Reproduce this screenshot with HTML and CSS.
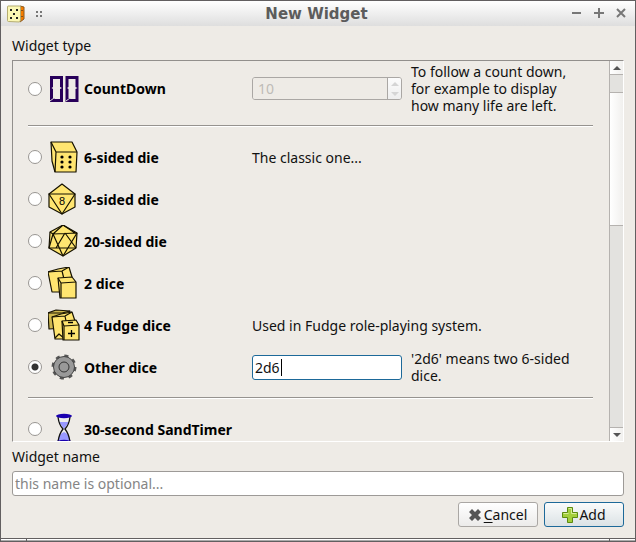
FILE: index.html
```html
<!DOCTYPE html>
<html lang="en">
<head>
<meta charset="utf-8">
<title>New Widget</title>
<link rel="stylesheet" href="styles.css">
</head>
<body>
<div class="window">
  <header class="titlebar">
    <div class="titlebar-side">
      <svg viewBox="0 0 18 18" width="18" height="18"><path d="M13 1l4 1v12l-4 3z" fill="#f57c00" stroke="#8a5a20"/><path d="M1 1h11.500q1 0 1 1v13l-1 2-11-.5q-1 0-1-1V2q0-1 .5-1z" fill="#fbf7b4" stroke="#b5ad70"/><path d="M3 4h2v2H3zM9 4h2v2H9zM6 8h2v2H6zM3 12h2v2H3zM9 12h2v2H9z" fill="#222"/><path d="M15 5v1M15 11v1" stroke="#222"/></svg>
      <svg viewBox="0 0 6 6" width="6" height="6"><path d="M0 0h2v2H0zM4 0h2v2H4zM0 4h2v2H0zM4 4h2v2H4z" fill="#777"/></svg>
    </div>
    <h1 class="title">New Widget</h1>
    <div class="titlebar-side titlebar-end">
      <button class="win-btn" aria-label="Minimize"><svg viewBox="0 0 10 10" width="10" height="10"><path d="M0 4h9"/></svg></button>
      <button class="win-btn" aria-label="Maximize"><svg viewBox="0 0 10 10" width="10" height="10"><path d="M0 4h10M5 -1v10"/></svg></button>
      <button class="win-btn" aria-label="Close"><svg viewBox="0 0 10 10" width="10" height="10"><path d="M1 0l8 8M9 0l-8 8"/></svg></button>
    </div>
  </header>

  <main class="content">
    <h2 class="label">Widget type</h2>
    <div class="type-box">
      <div class="type-list">
        <div class="row row-tall">
          <input type="radio" name="type" id="t-count">
          <svg class="icon" viewBox="0 0 32 32"><path fill="#28005a" fill-rule="evenodd" d="M2 3h13v26H2zM5 6v8l-1.500 1L5 16v9l2 1h5V16l2-1-2-1V6zM17.500 3h13v26h-13zM20.500 6v8l-1.500 1 1.500 1v9l2 1h5V16l2-1-2-1V6z"/><path d="M2 28l4-3M18 28l4-3" stroke="#ddd"/></svg>
          <label for="t-count">CountDown</label>
          <div class="spin"><input class="spin-input" type="number" value="10" disabled aria-label="Count"><span class="spin-arrows"><svg viewBox="0 0 8 14" width="8" height="14"><path d="M0 4l4-4 4 4zM0 10h8l-4 4z" fill="#d5d5d5"/></svg></span></div>
          <p class="note">To follow a count down, for example to display how many life are left.</p>
        </div>
        <hr>
        <div class="row">
          <input type="radio" name="type" id="t-6">
          <svg class="icon" viewBox="0 0 32 32"><path class="die" d="M3 1h21l5 10-1 20H7L4 20z"/><path class="die-edge" d="M3 1l5 10h21M8 11L7 31"/><g fill="#000"><circle cx="14" cy="16" r="1.600"/><circle cx="22" cy="16" r="1.600"/><circle cx="14" cy="21" r="1.600"/><circle cx="22" cy="21" r="1.600"/><circle cx="14" cy="26" r="1.600"/><circle cx="22" cy="26" r="1.600"/></g></svg>
          <label for="t-6">6-sided die</label>
          <p class="note note-wide">The classic one...</p>
        </div>
        <div class="row">
          <input type="radio" name="type" id="t-8">
          <svg class="icon" viewBox="0 0 32 32"><path class="die" d="M14 1l13 10v13l-13 7L1 24V11z"/><path class="die-edge" d="M1 11h26L14 31z"/><text class="die-digit" x="14" y="22">8</text></svg>
          <label for="t-8">8-sided die</label>
        </div>
        <div class="row">
          <input type="radio" name="type" id="t-20">
          <svg class="icon" viewBox="0 0 32 32"><path class="die" d="M15 0l14 8-1 15-13 8L1 23 2 7z"/><path class="die-edge" d="M15 0L5 9l24-1M2 7l3 2M15 0l12 8M5 9L1 23l27 0M5 9l10 22M17 8L8 23M17 8l11 15M29 8L15 31"/></svg>
          <label for="t-20">20-sided die</label>
        </div>
        <div class="row">
          <input type="radio" name="type" id="t-2">
          <svg class="icon" viewBox="0 0 32 32"><path class="die" d="M0 5l10-3 11-2 3 10-10 15H4z"/><path class="die-edge" d="M0 5l14-1 7-4M14 4l2 8"/><path class="die" d="M10 11l14-1 4 5v16H12z"/><path class="die-edge" d="M10 11l3 5 15-1M13 16v15"/></svg>
          <label for="t-2">2 dice</label>
        </div>
        <div class="row">
          <input type="radio" name="type" id="t-4">
          <svg class="icon" viewBox="0 0 32 32"><path class="die die-shade" d="M0 4l8-3 14 1-5 17-16 1z"/><path class="die-edge" d="M0 4l14 0 8-2"/><path class="die" d="M4 8l9-3 11-2 3 9-8 18H7z"/><path class="die-edge" d="M4 8l13-1 7-4M17 7l1 5M7 29l4-4 6 5"/><path class="die" d="M14 12l14-1 3 5v15H15z"/><path class="die-edge" d="M14 12l2 5 15-1M16 17v14"/><path d="M20 13.500h5M20 24.500h7M23.500 21v7" stroke="#000" stroke-width="1.300"/></svg>
          <label for="t-4">4 Fudge dice</label>
          <p class="note note-wide">Used in Fudge role-playing system.</p>
        </div>
        <div class="row">
          <input type="radio" name="type" id="t-other" checked>
          <svg class="icon" viewBox="0 0 32 32"><circle cx="16" cy="16" r="11" fill="none" stroke="#555" stroke-width="3" stroke-dasharray="4 4.640"/><circle cx="16" cy="16" r="10.500" fill="#999" stroke="#444"/><circle cx="16" cy="16" r="5" fill="#999" stroke="#333"/></svg>
          <label for="t-other">Other dice</label>
          <div class="dice-field"><input class="field field-active" type="text" value="2d6" aria-label="Dice expression"><span class="caret"></span></div>
          <p class="note">'2d6' means two 6-sided dice.</p>
        </div>
        <hr>
        <div class="row">
          <input type="radio" name="type" id="t-sand">
          <svg class="icon" viewBox="0 0 32 32"><path d="M10 4q1 8 5 12-4 5-5 13h12q-1-9-5-13 4-4 5-12z" fill="#eee"/><path d="M11 9h10l-5 7zM16 19q5 2 6 8H10q1-6 6-8" fill="#9999ff"/><path d="M10 4q1 8 5 12-4 5-5 13M22 4q-1 8-5 12 4 5 5 13" fill="none" stroke="#111" stroke-width="1.300"/><ellipse cx="16" cy="3" rx="8" ry="2.200" fill="#1a00b0"/><ellipse cx="16" cy="29" rx="8" ry="2.200" fill="#1a00b0"/></svg>
          <label for="t-sand">30-second SandTimer</label>
        </div>
      </div>
      <div class="scrollbar">
        <button class="scroll-btn" aria-label="Scroll up"><svg viewBox="0 0 8 4" width="8" height="4"><path d="M0 4l4-4 4 4z"/></svg></button>
        <div class="track"><div class="thumb"></div></div>
        <button class="scroll-btn" aria-label="Scroll down"><svg viewBox="0 0 8 4" width="8" height="4"><path d="M0 0h8L4 4z"/></svg></button>
      </div>
    </div>
    <label class="label" for="widget-name">Widget name</label>
    <input class="field" id="widget-name" type="text" placeholder="this name is optional...">
    <div class="actions">
      <button class="btn"><svg viewBox="0 0 12 12" width="12" height="12"><path d="M3 0l3 3 3-3 3 3-3 3 3 3-3 3-3-3-3 3-3-3 3-3-3-3z" fill="#555"/></svg><span><u>C</u>ancel</span></button>
      <button class="btn btn-default"><svg viewBox="0 0 16 16" width="16" height="16"><path d="M5.500.5h5v5h5v5h-5v5h-5v-5h-5v-5h5z" fill="#a4cf3c" stroke="#5c8a10"/><path d="M6.500 1.500h3v5h5M1.500 6.500h5" fill="none" stroke="#d9ee9a"/></svg><span>Add</span></button>
    </div>
  </main>
</div>
<div class="behind"><span></span><span></span><span></span></div>
</body>
</html>
```

FILE: styles.css
```css
* { box-sizing: border-box; }

body {
  margin: 0;
  height: 100vh;
  display: flex;
  flex-direction: column;
  background: #eeebe6;
  color: #111;
  font: 14px/17px "Noto Sans", sans-serif;
}

h1, h2, p { margin: 0; }
svg { display: block; flex: none; }
button, input { font: inherit; color: inherit; }
button { padding: 0; border: 0; background: none; }

.window {
  flex: 1;
  min-height: 0;
  display: flex;
  flex-direction: column;
  border: 1px solid #625f60;
}

.titlebar {
  display: flex;
  align-items: center;
  height: 25px;
  padding: 0 9px 0 6px;
  background: linear-gradient(#fff, #dedede);
}
.titlebar-side { flex: 1; display: flex; align-items: center; gap: 11px; }
.titlebar-end { justify-content: flex-end; gap: 12px; }
.title { font: bold 15px/24px "DejaVu Sans", sans-serif; color: #5c5c5c; }
.win-btn svg { overflow: visible; fill: none; stroke: #777; stroke-width: 2; }

.content {
  flex: 1;
  min-height: 0;
  display: flex;
  flex-direction: column;
  padding: 10px 11px 11px;
}
.label { font-size: 14px; font-weight: normal; line-height: 20px; margin-bottom: 4px; }

.type-box {
  flex: 1;
  min-height: 0;
  display: flex;
  margin-bottom: 5px;
  border: 1px solid #fff;
  border-top-color: #928f8c;
  border-left-color: #928f8c;
}
.type-list { flex: 1; overflow: hidden; padding: 0 16px 0 15px; }

.row {
  display: grid;
  grid-template-columns: 14px 38px 172px 150px 1fr;
  align-items: center;
  height: 42px;
}
.row-tall { height: 55px; }
.row .icon { width: 32px; height: 32px; margin-left: 6px; }
.row label { margin-left: 4px; font-weight: bold; color: #000; white-space: nowrap; }
.note { padding: 0 16px 0 9px; }
.note-wide { grid-column: 4 / 6; padding-left: 0; }

hr { height: 2px; margin: 9px 0; border: 0; border-top: 1px solid #96938f; background: #fff; }

input[type="radio"] {
  appearance: none;
  width: 14px;
  height: 14px;
  margin: 0;
  border: 1px solid #999693;
  border-radius: 50%;
  background: #fff;
}
input[type="radio"]:checked { background: radial-gradient(circle, #333 3px, #fff 4px); }

.die { fill: #ffe570; stroke: #151100; stroke-width: 1.2; stroke-linejoin: round; }
.die-edge { fill: none; stroke: #151100; stroke-width: 1.2; stroke-linejoin: round; }
.die-shade { fill: #cfb94f; }
.die-digit { font: 11px "Liberation Sans", sans-serif; text-anchor: middle; }

.field {
  width: 100%;
  height: 25px;
  padding: 0 2px;
  border: 1px solid #9d9a97;
  border-radius: 3px;
  background: #fff;
  outline: 0;
}
.field::placeholder { color: #858585; opacity: 1; }
.field-active { border-color: #1d6999; caret-color: transparent; }
.dice-field { position: relative; }
.caret { position: absolute; left: 29px; top: 4px; width: 1px; height: 17px; background: #000; }

.spin { display: flex; height: 23px; border: 1px solid #aaa7a4; border-radius: 3px; overflow: hidden; }
.spin-input {
  flex: 1;
  min-width: 0;
  padding: 0 5px;
  border: 0;
  background: #eeebe6;
  color: #bebbb7;
  appearance: textfield;
}
.spin-arrows {
  display: flex;
  align-items: center;
  justify-content: center;
  width: 14px;
  border-left: 1px solid #aaa7a4;
  background: linear-gradient(#fcfcfc, #eee);
}

.scrollbar { display: flex; flex-direction: column; width: 14px; border-left: 1px solid #b5b2af; background: #e3e2df; }
.scroll-btn { display: flex; align-items: center; justify-content: center; height: 13px; background: linear-gradient(90deg, #fff, #f1f0ee); }
.scroll-btn svg { fill: #555; }
.track { flex: 1; padding-top: 17px; border: 1px solid #b5b2af; border-width: 1px 0; }
.thumb { height: 40%; border: 1px solid #b5b2af; border-width: 1px 0; background: linear-gradient(90deg, #fff, #f1f0ee); }

.actions { display: flex; justify-content: flex-end; gap: 6px; margin-top: 6px; }
.btn {
  display: flex;
  align-items: center;
  justify-content: center;
  gap: 3px;
  width: 80px;
  height: 25px;
  border: 1px solid #aaa7a4;
  border-radius: 3px;
  background: linear-gradient(#fff, #ecebea);
}
.btn u { text-underline-offset: 2px; }
.btn-default { gap: 1px; border-color: #1d6999; background: linear-gradient(#fafbfb, #dbe2e5); }

.behind { display: flex; gap: 1px; height: 3px; padding: 0 1px; background: #625f60; }
.behind span { border-top: 1px solid #fff; border-bottom: 1px solid #625f60; background: #aaa; flex: 1; }
.behind span:first-child, .behind span:last-child { flex: 0 0 25px; }
```
